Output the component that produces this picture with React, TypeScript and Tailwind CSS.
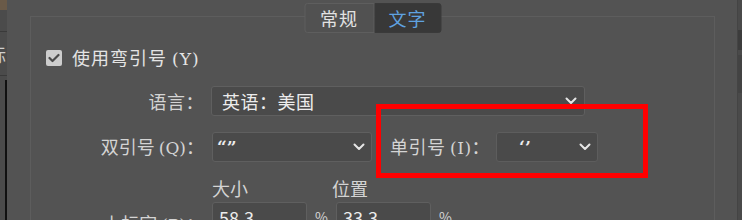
import React from "react";

const F = { fontFamily: '"Noto Sans CJK SC", "Noto Sans", sans-serif' };

function Chevron() {
  return (
    <svg width="12" height="8" viewBox="0 0 12 8" className="shrink-0">
      <path d="M1.5 1.5 L6 6 L10.5 1.5" fill="none" stroke="#e6e6e6" strokeWidth="2" strokeLinecap="round" strokeLinejoin="round" />
    </svg>
  );
}

function K({ k }: { k: string }) {
  return <span className="font-['DejaVu_Serif',serif] text-[17px]">({k})</span>;
}

export default function App() {
  return (
    <div
      className="relative flex h-[220px] w-[742px] overflow-hidden bg-[#535353] text-[#d4d4d4]"
      style={F}
    >
      {/* left strip of window behind */}
      <div className="flex w-[7px] shrink-0 flex-col bg-[#4b4b4b]">
        <div className="h-[10px] bg-[#6a5a48]" />
        <div className="h-[21px]" />
        <div className="h-px bg-[#3a3a3a]" />
        <div className="flex h-[43px] items-center overflow-hidden">
          <span className="-ml-[12px] text-[18px] leading-none text-[#cfcfcf]">标</span>
        </div>
        <div className="h-px bg-[#3a3a3a]" />
        <div className="flex flex-1 pt-[4px]">
          <div className="ml-[5px] w-[2px] bg-[#111111]" />
        </div>
      </div>

      {/* main dialog */}
      <div className="relative flex-1 border-r border-[#444444]">
        <div className="relative ml-[23px] mt-[16px] h-[240px] w-[685px] border border-[#5d5d5d]">
          {/* tabs */}
          <div className="absolute -top-[14px] left-1/2 flex h-[30px] -translate-x-1/2 text-[18px] leading-none">
            <div className="flex w-[70px] items-center justify-center rounded-l-[3px] border border-[#5e5e5e] bg-[#515151] tracking-[1px] text-[#e2e2e2]">
              常规
            </div>
            <div className="flex w-[67px] items-center justify-center rounded-r-[3px] border border-[#3a3a3a] bg-[#383838] tracking-[1px] text-[#5fa2e0]">
              文字
            </div>
          </div>

          <div className="flex flex-col pt-[32px]">
            {/* checkbox */}
            <div className="ml-[15px] flex h-[18px] items-center gap-[10px]">
              <div className="flex h-[16px] w-[16px] items-center justify-center rounded-[2px] bg-[#cdcdcd]">
                <svg width="12" height="10" viewBox="0 0 12 10">
                  <path d="M1.5 5 L4.5 8 L10.5 2" fill="none" stroke="#4a4a4a" strokeWidth="2.2" strokeLinecap="round" strokeLinejoin="round" />
                </svg>
              </div>
              <span className="text-[18px] leading-none tracking-[1px] text-[#e4e4e4]">
                使用弯引号 <K k="Y" />
              </span>
            </div>

            {/* language */}
            <div className="mt-[19px] flex h-[30px] items-center">
              <div className="w-[175px] pr-[2px] text-right text-[18px] leading-none tracking-[0.5px]">语言：</div>
              <div className="ml-[5px] flex h-[30px] w-[374px] items-center justify-between rounded-[3px] border border-[#5f5f5f] bg-[#4a4a4a] pl-[10px] pr-[7px]">
                <span className="text-[18px] leading-none tracking-[0.5px] text-[#ececec]">英语：美国</span>
                <Chevron />
              </div>
            </div>

            {/* quotes */}
            <div className="mt-[16px] flex h-[30px] items-center">
              <div className="w-[175px] pr-[2px] text-right text-[18px] leading-none">
                双引号 <K k="Q" />：
              </div>
              <div className="ml-[6px] flex h-[30px] w-[160px] items-center justify-between rounded-[3px] border border-[#5f5f5f] bg-[#4a4a4a] pl-[4px] pr-[6px]">
                <span className="font-['DejaVu_Serif',serif] text-[17px] font-bold leading-none text-[#ececec]">“”</span>
                <Chevron />
              </div>
              <div className="ml-[18px] text-[18px] leading-none tracking-[0.5px]">
                单引号 <K k="I" />：
              </div>
              <div className="ml-[6px] flex h-[30px] w-[102px] items-center justify-between rounded-[3px] border border-[#5d5d5d] bg-[#4a4a4a] pl-[22px] pr-[6px]">
                <span className="font-['DejaVu_Serif',serif] text-[17px] font-bold leading-none text-[#ececec]">‘’</span>
                <Chevron />
              </div>
            </div>

            {/* size / position */}
            <div className="mt-[14px] flex h-[24px] items-center pl-[181px] text-[18px] leading-none">
              <span className="w-[120px]">大小</span>
              <span>位置</span>
            </div>
            <div className="mt-[2px] flex h-[30px] items-center">
              <div className="w-[175px] pr-[2px] pt-[14px] text-right text-[18px] leading-none">
                上标字 <K k="P" />：
              </div>
              <div className="ml-[6px] flex h-[30px] w-[95px] items-center rounded-[3px] border border-[#5f5f5f] bg-[#4a4a4a] pl-[6px] text-[18px] leading-none text-[#ececec]">
                58.3
              </div>
              <span className="ml-[8px] text-[14px]">%</span>
              <div className="ml-[8px] flex h-[30px] w-[95px] items-center rounded-[3px] border border-[#5f5f5f] bg-[#4a4a4a] pl-[6px] text-[18px] leading-none text-[#ececec]">
                33.3
              </div>
              <span className="ml-[8px] text-[14px]">%</span>
            </div>
          </div>
        </div>

        {/* red annotation box */}
        <div className="pointer-events-none absolute left-[369px] top-[104px] h-[74px] w-[272px] border-[5px] border-[#ff0000]" />
      </div>

      {/* right edge of window behind */}
      <div className="flex w-[4px] shrink-0 flex-col bg-[#4a4a4a]">
        <div className="h-[30px]" />
        <div className="h-[20px] bg-[#3c3c3c]" />
        <div className="h-[5px]" />
        <div className="h-[38px] bg-[#434343]" />
      </div>
    </div>
  );
}
